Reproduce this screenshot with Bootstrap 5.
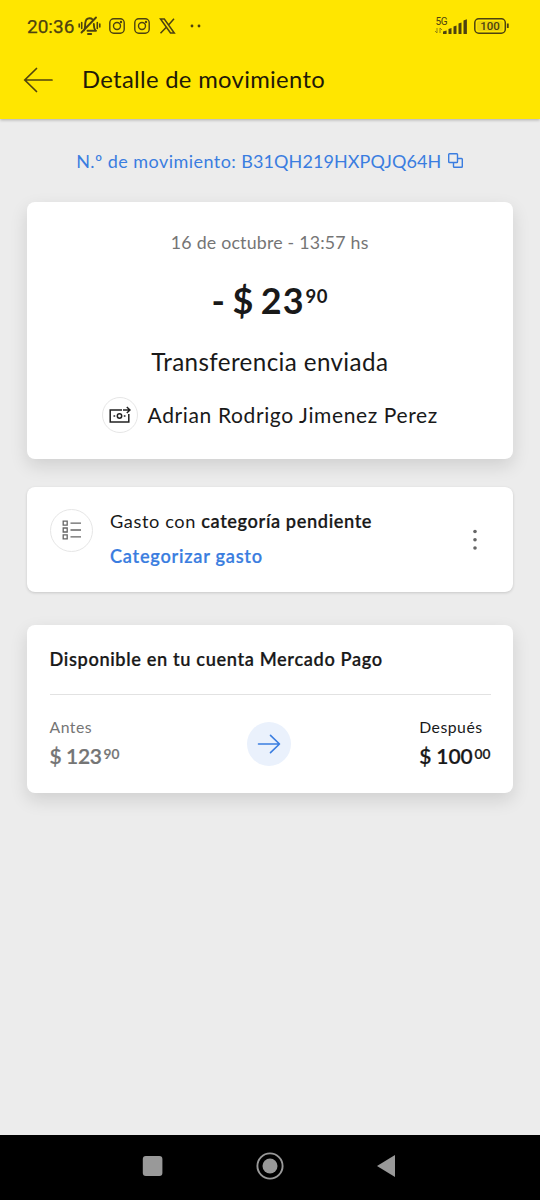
<!DOCTYPE html>
<html lang="es">
<head>
<meta charset="utf-8">
<meta name="viewport" content="width=device-width, initial-scale=1">
<title>Detalle de movimiento</title>
<link href="https://cdn.jsdelivr.net/npm/bootstrap@5.3.0/dist/css/bootstrap.min.css" rel="stylesheet">
<style>
  body { font-family: Lato, "Open Sans", sans-serif; background: #ececec; color: #191919; }
  svg { display: block; flex: none; }
  .screen { height: 1200px; }
  .top-area { height: 119px; background: #ffe600; box-shadow: 0 1px 3px rgba(0,0,0,.28); }
  .status-row { height: 52px; padding: 0 31px 0 27px; color: #4d4210; font-family: Roboto, sans-serif; }
  .clock { font-size: 19px; line-height: 50px; width: 51px; padding-top: 2px; white-space: nowrap; -webkit-text-stroke: .25px #4d4210; }
  .title-row { height: 56px; padding-left: 23px; }
  .title-row h1 { font-size: 23.8px; font-weight: 400; line-height: 54px; padding-bottom: 2px; margin-left: 29px; color: #1f1a08; letter-spacing: .32px; }
  .page-body { padding: 0 27.5px 0 27px; }
  .move-id { height: 83px; color: #3a7de0; font-size: 18px; line-height: 84px; letter-spacing: .45px; }
  .move-code { letter-spacing: .08px; }
  .move-id svg { margin-left: 7px; }
  .panel { border: 0; border-radius: 8px; background: #fff; }
  .lifted { box-shadow: 0 7px 18px rgba(0,0,0,.12); }
  .flat { box-shadow: 0 1px 3px rgba(0,0,0,.16); }
  .summary { height: 257px; }
  .date { margin-top: 27px; font-size: 17.8px; line-height: 26px; color: #757575; letter-spacing: .2px; }
  .amount { margin-top: 21px; font-size: 36px; line-height: 48px; font-weight: 700; letter-spacing: .5px; }
  .amount .minus { margin-right: 7px; }
  .amount .whole { margin-left: 7px; letter-spacing: 1px; }
  .amount .cents { font-size: 18.5px; line-height: 40px; margin-left: 1px; }
  .kind { margin-top: 21px; font-size: 24.2px; line-height: 34px; letter-spacing: .38px; }
  .person { margin-top: 18px; font-size: 21px; line-height: 36px; letter-spacing: .62px; }
  .person-name { margin-left: 10px; }
  .ring { border: 1px solid #e6e6e6; border-radius: 50%; display: flex; align-items: center; justify-content: center; flex: none; }
  .ring-s { width: 36px; height: 36px; }
  .ring-m { width: 43px; height: 43px; }
  .category { height: 105px; margin-top: 28px; padding: 21.5px 35px 0 23px; font-size: 18.2px; letter-spacing: .6px; }
  .category .lines { line-height: 26px; margin: -1px 0 0 17px; }
  .category b, .category a, .balance h2 { font-weight: 600; -webkit-text-stroke: .2px currentColor; }
  .category a { color: #3a7de0; margin-top: 9px; letter-spacing: .74px; }
  .dots { margin-top: 20px; }
  .balance { height: 168px; margin-top: 33px; padding: 0 22px 0 22.5px; }
  .balance h2 { font-size: 18.2px; line-height: 69px; height: 70px; border-bottom: 1px solid #e2e2e2; margin: 0; letter-spacing: .63px; }
  .balance-row { padding-top: 21px; }
  .when { font-size: 15.8px; line-height: 22px; letter-spacing: .5px; }
  .sum { font-size: 21px; line-height: 30px; font-weight: 600; margin-top: 3px; letter-spacing: -.1px; -webkit-text-stroke: .2px currentColor; }
  .sum .cents { font-size: 13.7px; line-height: 25px; margin-left: 2px; letter-spacing: 0; }
  .soft .sum { letter-spacing: -.4px; }
  .go { width: 44px; height: 44px; border-radius: 50%; background: #eaf1fc; margin: 5.5px 1px 0 0; }
  .soft { color: #757575; }
  .nav-keys { height: 65px; background: #000; padding: 0 143px 4px 142px; }
</style>
</head>
<body>
<div class="screen d-flex flex-column overflow-hidden">
  <header class="top-area">
    <div class="status-row d-flex align-items-center">
      <span class="clock">20:36</span>
      <svg width="23" height="20" viewBox="0 0 23 20" fill="none" stroke="#4d4210" stroke-width="1.600" stroke-linecap="round">
        <path d="M1.200 8v3M3.700 6.500v6M19.300 6.500v6M21.800 8v3"/>
        <path d="M6 14.500c1.400-2 1-4 1.200-7C7.500 4 9 2.300 11.500 2.300c1.400 0 2.300.4 3 1.100M15.800 8c0 3 .3 4.800 1.700 6.500M9.500 14.800h8.500M3.500 16.500 18 1.500M10 18h3.200" stroke-width="1.900"/>
      </svg>
      <svg class="ms-2" width="16" height="16" viewBox="0 0 16 16" fill="none" stroke="#4d4210" stroke-width="1.400"><rect x=".8" y=".8" width="14.400" height="14.400" rx="4"/><circle cx="8" cy="8" r="3.500"/><circle cx="12" cy="4" r=".5"/></svg>
      <svg style="margin-left:9px" width="16" height="16" viewBox="0 0 16 16" fill="none" stroke="#4d4210" stroke-width="1.400"><rect x=".8" y=".8" width="14.400" height="14.400" rx="4"/><circle cx="8" cy="8" r="3.500"/><circle cx="12" cy="4" r=".5"/></svg>
      <svg style="margin-left:9px" width="17" height="16" viewBox="0 0 17 16" fill="none" stroke="#4d4210" stroke-width="1.500"><path d="M1.500 1h3.800l10 14h-3.800zM15 .8 9.300 7.200M7.300 9.200 1.500 15.300"/></svg>
      <svg style="margin-left:14px" width="12" height="4" viewBox="0 0 12 4" fill="#4d4210"><circle cx="2" cy="2" r="1.400"/><circle cx="9" cy="2" r="1.400"/></svg>
      <svg class="ms-auto" width="34" height="20" viewBox="0 0 34 20">
        <text x="1.500" y="9" font-family="Roboto" font-size="10" fill="#4d4210" textLength="12">5G</text>
        <path d="M3 12v5M1 15l2 2M6 17v-5l2 2" fill="none" stroke="#8b7b13" stroke-width=".9"/>
        <path d="M9 18v-2.500l3.600-1V18zM14.500 18v-5l3-1V18zM19.500 18v-7.500l3-1V18zM24.500 18V7.500l3-1V18zM29.500 18V4.500l3.400-1.200V18z" fill="#4d4210"/>
      </svg>
      <svg style="margin-left:6px" width="35" height="16" viewBox="0 0 35 16">
        <rect x=".8" y=".8" width="30.500" height="14.400" rx="4" fill="none" stroke="#4d4210" stroke-width="1.500"/>
        <rect x="3" y="3" width="26" height="10" rx="2" fill="#ecd40c"/>
        <path d="M33.800 5.500v4.500" stroke="#4d4210" stroke-width="1.800"/>
        <text x="16" y="12" text-anchor="middle" font-family="Roboto" font-weight="500" font-size="11.500" fill="#4d4210">100</text>
      </svg>
    </div>
    <div class="title-row d-flex align-items-center">
      <svg width="30" height="26" viewBox="0 0 30 26" fill="none" stroke="#51440d" stroke-width="1.700" stroke-linecap="round"><path d="M29 13H2M13.500 1.500 1.800 13l11.700 11.500"/></svg>
      <h1 class="mb-0">Detalle de movimiento</h1>
    </div>
  </header>

  <main class="page-body flex-grow-1">
    <div class="move-id d-flex justify-content-center align-items-center">
      <span>N.º de movimiento: <span class="move-code">B31QH219HXPQJQ64H</span></span>
      <svg width="15" height="15" viewBox="0 0 15 15" fill="none" stroke="#3a7de0" stroke-width="1.400"><rect x=".7" y=".7" width="8.800" height="8.800" rx=".8"/><path d="M9.500 5.500h4a.8.8 0 0 1 .8.8v7.200a.8.8 0 0 1-.8.8H6.300a.8.8 0 0 1-.8-.8v-4"/></svg>
    </div>

    <section class="card panel lifted summary align-items-center">
      <div class="date">16 de octubre - 13:57 hs</div>
      <div class="amount d-flex"><span class="minus">-</span><span>$</span><span class="whole">23</span><span class="cents">90</span></div>
      <div class="kind">Transferencia enviada</div>
      <div class="person d-flex align-items-center">
        <span class="ring ring-s"><svg width="22" height="18" viewBox="0 0 22 18" fill="none" stroke="#222" stroke-width="1.500"><path d="M13 4H1.200v12h18.600V8M14 4h7M17.800 1 21 4l-3.200 3"/><circle cx="10.500" cy="10" r="2.200"/><path d="M4.500 10h1.700M14.800 10h1.700"/></svg></span>
        <span class="person-name">Adrian Rodrigo Jimenez Perez</span>
      </div>
    </section>

    <section class="card panel flat category flex-row align-items-start">
      <span class="ring ring-m"><svg width="20" height="20" viewBox="0 0 20 20" fill="none" stroke="#666" stroke-width="1.300"><path d="M1.200 1.200h4v4h-4zM1.200 8h4v4h-4zM1.200 14.800h4v4h-4zM8.500 3.200H19M8.500 10H19M8.500 16.800H19"/></svg></span>
      <div class="lines">
        <div>Gasto con <b>categoría pendiente</b></div>
        <a href="#" class="d-block text-decoration-none">Categorizar gasto</a>
      </div>
      <svg class="dots ms-auto" width="6" height="22" viewBox="0 0 6 22" fill="#666"><circle cx="3" cy="2.500" r="1.800"/><circle cx="3" cy="10.800" r="1.800"/><circle cx="3" cy="19" r="1.800"/></svg>
    </section>

    <section class="card panel lifted balance">
      <h2>Disponible en tu cuenta Mercado Pago</h2>
      <div class="balance-row d-flex justify-content-between align-items-start">
        <div class="soft">
          <div class="when">Antes</div>
          <div class="sum d-flex"><span>$ 123</span><span class="cents">90</span></div>
        </div>
        <span class="go d-flex align-items-center justify-content-center"><svg width="24" height="20" viewBox="0 0 24 20" fill="none" stroke="#3a7de0" stroke-width="1.600" stroke-linecap="round" stroke-linejoin="round"><path d="M1.500 10h21M13.500 1.300l9 8.700-9 8.700"/></svg></span>
        <div>
          <div class="when">Después</div>
          <div class="sum d-flex"><span>$ 100</span><span class="cents">00</span></div>
        </div>
      </div>
    </section>
  </main>

  <footer class="nav-keys d-flex justify-content-between align-items-center">
    <svg width="21" height="20" viewBox="0 0 21 20"><rect x=".8" width="19.600" height="20" rx="3" fill="#999"/></svg>
    <svg width="28" height="28" viewBox="0 0 28 28"><circle cx="14" cy="14" r="12.600" fill="none" stroke="#999" stroke-width="1.900"/><circle cx="14" cy="14" r="7.500" fill="#999"/></svg>
    <svg width="21" height="24" viewBox="0 0 21 24"><path d="M19 1v22L1 12z" fill="#999"/></svg>
  </footer>
</div>
<script src="https://cdn.jsdelivr.net/npm/bootstrap@5.3.0/dist/js/bootstrap.bundle.min.js"></script>
</body>
</html>
